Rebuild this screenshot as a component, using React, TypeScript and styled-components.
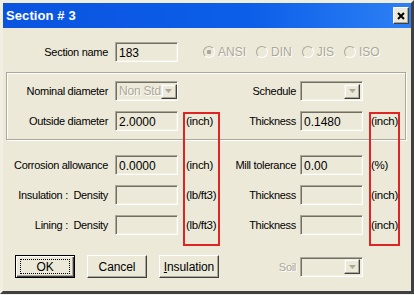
import React from 'react';
import styled, { createGlobalStyle } from 'styled-components';

const GlobalStyle = createGlobalStyle`
    html, body {
        margin: 0;
        padding: 0;
        background: #f4f3ee;
    }
    body {
        font-family: 'Liberation Sans', Arial, sans-serif;
        font-size: 11px;
        color: #000;
    }
`;

const face = '#ece9d8';
const shadow = '#aca899';
const darkShadow = '#716f64';

const Window = styled.div`
    position: relative;
    box-sizing: border-box;
    width: 414px;
    height: 294px;
    background: ${face};
    border-style: solid;
    border-width: 3px;
    border-color: #f1efe2 #404040 #404040 #f1efe2;
    display: flex;
    flex-direction: column;
`;

const TitleBar = styled.div`
    height: 25px;
    flex: none;
    display: flex;
    align-items: center;
    justify-content: space-between;
    padding: 0 2px 0 3px;
    background: linear-gradient(to right, #0a54e0 0%, #0c5ee8 60%, #2d80f4 100%);
`;

const Title = styled.div`
    color: #fff;
    font-weight: bold;
    font-size: 13px;
    letter-spacing: 0.1px;
`;

const CloseButton = styled.div`
    box-sizing: border-box;
    width: 16px;
    height: 17px;
    background: ${face};
    border: 1px solid;
    border-color: #fff #404040 #404040 #fff;
    box-shadow: inset -1px -1px 0 ${shadow};
    display: flex;
    align-items: center;
    justify-content: center;
`;

const Body = styled.div`
    display: flex;
    flex-direction: column;
    letter-spacing: -0.3px;
`;

const Row = styled.div<{ $top: number }>`
    display: flex;
    align-items: center;
    height: 20px;
    margin-top: ${(p) => p.$top}px;
`;

const Label = styled.div<{ $w: number; $disabled?: boolean }>`
    width: ${(p) => p.$w}px;
    flex: none;
    text-align: right;
    white-space: pre;
    color: ${(p) => (p.$disabled ? shadow : '#000')};
    text-shadow: ${(p) => (p.$disabled ? '1px 1px 0 #fff' : 'none')};
`;

const Field = styled.div<{ $gap: number }>`
    box-sizing: border-box;
    width: 63px;
    height: 20px;
    flex: none;
    margin-left: ${(p) => p.$gap}px;
    padding: 2px 3px 0;
    display: flex;
    align-items: center;
    white-space: nowrap;
    background: ${face};
    border: 1px solid;
    border-color: ${shadow} #fff #fff ${shadow};
    box-shadow: inset 1px 1px 0 ${darkShadow}, inset -1px -1px 0 #f1efe2;
    font-size: 12px;
    letter-spacing: 0;
`;

const ComboField = styled(Field)`
    padding: 0 2px 0 3px;
    justify-content: space-between;
    color: ${shadow};
    text-shadow: 1px 1px 0 #fff;
    letter-spacing: -0.2px;
`;

const DropButton = styled.div`
    box-sizing: border-box;
    width: 16px;
    height: 15px;
    flex: none;
    background: ${face};
    border: 1px solid;
    border-color: #f1efe2 #404040 #404040 #f1efe2;
    box-shadow: inset -1px -1px 0 ${shadow}, inset 1px 1px 0 #fff;
    display: flex;
    align-items: center;
    justify-content: center;
`;

const Unit = styled.div<{ $w?: number }>`
    width: ${(p) => p.$w ?? 46}px;
    margin-left: 8px;
    flex: none;
    white-space: nowrap;
    font-size: 11.5px;
`;

const Group = styled.div`
    margin: 10px 0 0 3px;
    width: 400px;
    box-sizing: border-box;
    border: 1px solid ${shadow};
    box-shadow: inset 1px 1px 0 #fff, 1px 1px 0 #fff;
    padding: 8px 0 8px 1px;
    display: flex;
    flex-direction: column;
`;

const Radios = styled.div`
    display: flex;
    align-items: center;
    gap: 10px;
    margin-left: 25px;
`;

const Radio = styled.div<{ $checked?: boolean }>`
    display: flex;
    align-items: center;
    gap: 3px;
    color: ${shadow};
    text-shadow: 1px 1px 0 #fff;
    font-size: 12px;
    letter-spacing: 0;

    &::before {
        content: '';
        box-sizing: border-box;
        width: 12px;
        height: 12px;
        border-radius: 50%;
        border: 1px solid;
        border-color: ${shadow} #fff #fff ${shadow};
        background: ${(p) =>
            p.$checked
                ? `radial-gradient(circle, ${shadow} 0 2px, ${face} 2.5px)`
                : face};
    }
`;

const Buttons = styled.div`
    display: flex;
    align-items: center;
    margin-top: 20px;
    padding-left: 12px;
`;

const Button = styled.div<{ $default?: boolean }>`
    box-sizing: border-box;
    width: 60px;
    height: 23px;
    margin-right: 12px;
    flex: none;
    display: flex;
    align-items: center;
    justify-content: center;
    font-size: 12px;
    letter-spacing: -0.1px;
    background: ${face};
    border: 1px solid;
    border-color: ${(p) => (p.$default ? '#000' : '#fff #404040 #404040 #fff')};
    box-shadow: ${(p) =>
        p.$default
            ? `inset 1px 1px 0 #fff, inset -1px -1px 0 #404040, inset -2px -2px 0 ${shadow}`
            : `inset -1px -1px 0 ${shadow}`};
`;

const Focus = styled.div`
    box-sizing: border-box;
    width: 50px;
    height: 15px;
    border: 1px dotted #000;
    display: flex;
    align-items: center;
    justify-content: center;
`;

const Mnemonic = styled.span`
    text-decoration: underline;
`;

const Marker = styled.div<{ $x: number; $w: number }>`
    position: absolute;
    top: 109px;
    left: ${(p) => p.$x}px;
    width: ${(p) => p.$w}px;
    height: 134px;
    box-sizing: border-box;
    border: 2px solid #e02424;
    pointer-events: none;
`;

const Arrow = ({ color }: { color: string }) => (
    <svg width="7" height="4" viewBox="0 0 7 4">
        <path d="M0 0h7L3.5 4z" fill={color} />
    </svg>
);

const Combo = ({ value, gap }: { value?: string; gap: number }) => (
    <ComboField $gap={gap}>
        <span>{value}</span>
        <DropButton>
            <Arrow color={shadow} />
        </DropButton>
    </ComboField>
);

interface LineProps {
    label: string;
    value?: string;
    unit: string;
    label2: string;
    value2?: string;
    unit2: string;
    top: number;
    labelWidth: number;
}
const Line = (props: LineProps) => (
    <Row $top={props.top}>
        <Label $w={props.labelWidth}>{props.label}</Label>
        <Field $gap={7}>{props.value}</Field>
        <Unit>{props.unit}</Unit>
        <Label $w={64}>{props.label2}</Label>
        <Field $gap={4}>{props.value2}</Field>
        <Unit>{props.unit2}</Unit>
    </Row>
);

const App = () => {
    return (
        <>
            <GlobalStyle />
            <Window>
                <TitleBar>
                    <Title>Section # 3</Title>
                    <CloseButton>
                        <svg width="8" height="8" viewBox="0 0 8 8">
                            <path d="M1 1l6 6M7 1L1 7" stroke="#000" strokeWidth="2" />
                        </svg>
                    </CloseButton>
                </TitleBar>
                <Body>
                    <Row $top={14}>
                        <Label $w={105}>Section name</Label>
                        <Field $gap={7}>183</Field>
                        <Radios>
                            <Radio $checked>ANSI</Radio>
                            <Radio>DIN</Radio>
                            <Radio>JIS</Radio>
                            <Radio>ISO</Radio>
                        </Radios>
                    </Row>

                    <Group>
                        <Row $top={0}>
                            <Label $w={100}>Nominal diameter</Label>
                            <Combo value="Non Std" gap={7} />
                            <Unit />
                            <Label $w={64}>Schedule</Label>
                            <Combo gap={4} />
                        </Row>
                        <Line
                            top={10}
                            labelWidth={100}
                            label="Outside diameter"
                            value="2.0000"
                            unit="(inch)"
                            label2="Thickness"
                            value2="0.1480"
                            unit2="(inch)"
                        />
                    </Group>

                    <Line
                        top={15}
                        labelWidth={105}
                        label="Corrosion allowance"
                        value="0.0000"
                        unit="(inch)"
                        label2="Mill tolerance"
                        value2="0.00"
                        unit2="(%)"
                    />
                    <Line
                        top={10}
                        labelWidth={105}
                        label="Insulation :  Density"
                        unit="(lb/ft3)"
                        label2="Thickness"
                        unit2="(inch)"
                    />
                    <Line
                        top={10}
                        labelWidth={105}
                        label="Lining :  Density"
                        unit="(lb/ft3)"
                        label2="Thickness"
                        unit2="(inch)"
                    />

                    <Buttons>
                        <Button $default>
                            <Focus>OK</Focus>
                        </Button>
                        <Button>Cancel</Button>
                        <Button>
                            <span>
                                <Mnemonic>I</Mnemonic>nsulation
                            </span>
                        </Button>
                        <Label $w={65} $disabled>
                            Soil
                        </Label>
                        <Combo gap={4} />
                    </Buttons>
                </Body>
                <Marker $x={180} $w={37} />
                <Marker $x={366} $w={31} />
            </Window>
        </>
    );
};

export default App;
